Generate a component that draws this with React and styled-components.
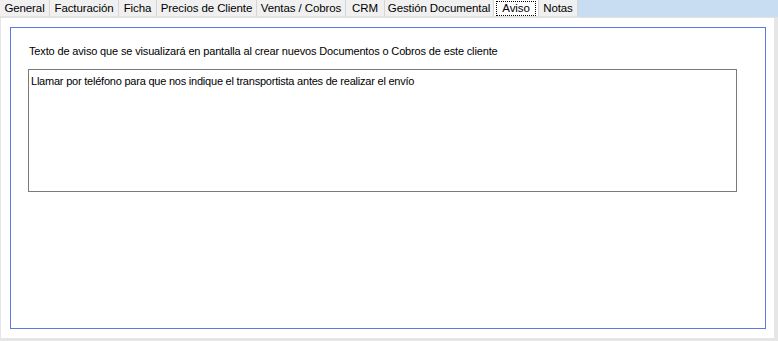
import React from "react";
import styled, { createGlobalStyle } from "styled-components";

const Global = createGlobalStyle`
  html, body {
    margin: 0;
    padding: 0;
    background: #ffffff;
  }
  body {
    font-family: "Liberation Sans", Arial, sans-serif;
    font-size: 11px;
    color: #000;
  }
`;

const Window = styled.div`
  width: 778px;
  height: 341px;
  display: flex;
  flex-direction: column;
  background: #ffffff;
  overflow: hidden;
`;

const TabBar = styled.div`
  display: flex;
  height: 17px;
  background: #c8ddf2;
  border-bottom: 1px solid #e3e3e3;
`;

const Tab = styled.div`
  box-sizing: border-box;
  width: ${props => props.w}px;
  height: 17px;
  display: flex;
  align-items: center;
  justify-content: center;
  font-size: 11.5px;
  letter-spacing: -0.1px;
  background: ${props => (props.active ? "#ffffff" : "#f0f0f0")};
  border-right: 1px solid #d6d6d6;
  border-bottom: 1px solid #e3e3e3;
  white-space: nowrap;
`;

const FocusLabel = styled.span`
  border: 1px dotted #000;
  padding: 0 5px;
  line-height: 13px;
`;

const Body = styled.div`
  flex: 1;
  display: flex;
  padding: 9px 8px 9px 9px;
  border-right: 4px solid #e6e6e6;
  border-left: 1px solid #e6e6e6;
  border-bottom: 3px solid #e6e6e6;
`;

const Frame = styled.div`
  flex: 1;
  border: 1px solid #5b78e4;
  padding: 16px 28px 0 17px;
  display: flex;
  flex-direction: column;
`;

const Label = styled.div`
  font-size: 11px;
  letter-spacing: -0.15px;
  height: 14px;
  line-height: 14px;
  padding-left: 1px;
  margin-bottom: 11px;
`;

const Memo = styled.div`
  height: 123px;
  border: 1px solid #7a7a7a;
  padding: 4px 3px 4px 2px;
  font-size: 11px;
  letter-spacing: -0.22px;
  line-height: 14px;
  box-sizing: border-box;
`;

const tabs = [
  { label: "General", w: 50 },
  { label: "Facturación", w: 69 },
  { label: "Ficha", w: 38 },
  { label: "Precios de Cliente", w: 100 },
  { label: "Ventas / Cobros", w: 89 },
  { label: "CRM", w: 39 },
  { label: "Gestión Documental", w: 109 },
  { label: "Aviso", w: 45, active: true },
  { label: "Notas", w: 39 }
];

export default function App() {
  return (
    <Window>
      <Global />
      <TabBar>
        {tabs.map(t => (
          <Tab key={t.label} w={t.w} active={t.active}>
            {t.active ? <FocusLabel>{t.label}</FocusLabel> : t.label}
          </Tab>
        ))}
      </TabBar>
      <Body>
        <Frame>
          <Label>
            Texto de aviso que se visualizará en pantalla al crear nuevos
            Documentos o Cobros de este cliente
          </Label>
          <Memo>
            Llamar por teléfono para que nos indique el transportista antes de
            realizar el envío
          </Memo>
        </Frame>
      </Body>
    </Window>
  );
}
